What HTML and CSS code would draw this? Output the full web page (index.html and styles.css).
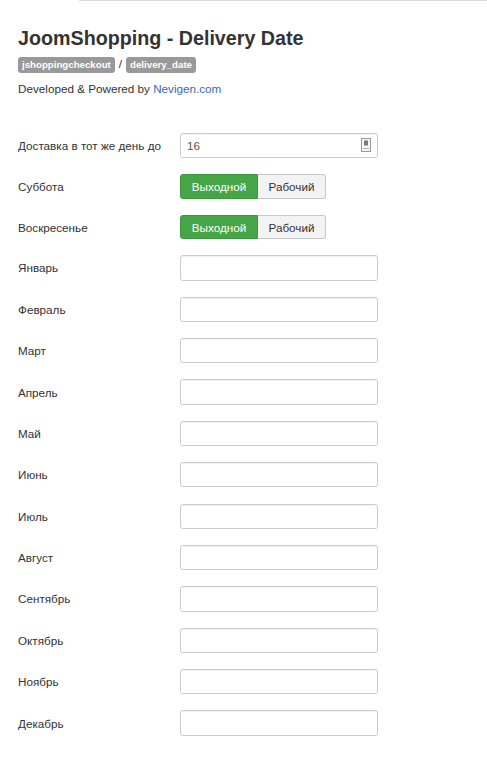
FILE: index.html
```html
<!DOCTYPE html>
<html>
<head>
<meta charset="utf-8">
<link rel="stylesheet" href="styles.css">
</head>
<body>
<div class="tabline"></div>
<div class="page">
  <h1 class="title">JoomShopping - Delivery Date</h1>
  <div class="badges"><span class="badge">jshoppingcheckout</span><span class="sep">/</span><span class="badge">delivery_date</span></div>
  <p class="credit">Developed &amp; Powered by <a href="#" class="link">Nevigen.com</a></p>

  <form class="form">
    <div class="row">
      <label class="lbl">Доставка в тот же день до</label>
      <div class="field">
        <input class="inp" type="text" value="16">
        <svg class="ficon" width="10" height="14" viewBox="0 0 10 14"><rect x="0.5" y="0.5" width="9" height="13" fill="#f4f4f4" stroke="#9a9a9a"/><rect x="3" y="2.5" width="4" height="5" fill="#7a7a7a"/><line x1="2" y1="10.5" x2="8" y2="10.5" stroke="#b0b0b0"/></svg>
      </div>
    </div>
    <div class="row row-btn">
      <label class="lbl">Суббота</label>
      <div class="btn-group"><span class="btn btn-on">Выходной</span><span class="btn btn-off">Рабочий</span></div>
    </div>
    <div class="row row-btn">
      <label class="lbl">Воскресенье</label>
      <div class="btn-group"><span class="btn btn-on">Выходной</span><span class="btn btn-off">Рабочий</span></div>
    </div>
    <div class="row"><label class="lbl">Январь</label><input class="inp" type="text"></div>
    <div class="row"><label class="lbl">Февраль</label><input class="inp" type="text"></div>
    <div class="row"><label class="lbl">Март</label><input class="inp" type="text"></div>
    <div class="row"><label class="lbl">Апрель</label><input class="inp" type="text"></div>
    <div class="row"><label class="lbl">Май</label><input class="inp" type="text"></div>
    <div class="row"><label class="lbl">Июнь</label><input class="inp" type="text"></div>
    <div class="row"><label class="lbl">Июль</label><input class="inp" type="text"></div>
    <div class="row"><label class="lbl">Август</label><input class="inp" type="text"></div>
    <div class="row"><label class="lbl">Сентябрь</label><input class="inp" type="text"></div>
    <div class="row"><label class="lbl">Октябрь</label><input class="inp" type="text"></div>
    <div class="row"><label class="lbl">Ноябрь</label><input class="inp" type="text"></div>
    <div class="row"><label class="lbl">Декабрь</label><input class="inp" type="text"></div>
  </form>
</div>
</body>
</html>
```
FILE: styles.css
```css
html, body {
  margin: 0;
  padding: 0;
  background: #fff;
}
body {
  font-family: "Liberation Sans", Arial, sans-serif;
  color: #333;
  font-size: 11.7px;
}
.tabline {
  height: 1px;
  margin-left: 79px;
  background: #dddddd;
}
.page {
  padding: 0 18px;
}
.title {
  margin: 25px 0 0;
  font-size: 19.7px;
  line-height: 24px;
  font-weight: bold;
  color: #333;
}
.badges {
  margin-top: 7px;
  display: flex;
  align-items: center;
  height: 16px;
}
.badge {
  display: inline-block;
  background: #999;
  color: #fff;
  font-weight: bold;
  font-size: 9.7px;
  line-height: 16px;
  height: 16px;
  padding: 0 4px;
  border-radius: 3px;
}
.sep {
  margin: 0 4px 0 4px;
  font-size: 11.7px;
  position: relative;
  top: -2px;
}
.credit {
  margin: 8px 0 0;
  font-size: 11.7px;
  line-height: 16px;
}
.link {
  color: #3a6aa8;
  text-decoration: none;
}
.form {
  margin-top: 36px;
  display: flex;
  flex-direction: column;
  gap: 16.2px;
}
.row {
  display: flex;
  align-items: center;
  height: 25.2px;
}
.row-btn {
  height: 24.3px;
}
.lbl {
  width: 162px;
  flex: none;
  font-size: 11.7px;
  color: #333;
}
.field {
  position: relative;
  width: 198px;
  height: 25.2px;
}
.inp {
  box-sizing: border-box;
  width: 198px;
  height: 25.2px;
  margin: 0;
  padding: 0 6px;
  border: 1px solid #cccccc;
  border-radius: 2.7px;
  box-shadow: inset 0 1px 1px rgba(0,0,0,0.06);
  font-family: "Liberation Sans", Arial, sans-serif;
  font-size: 11.7px;
  color: #555;
  background: #fff;
  outline: none;
}
.ficon {
  position: absolute;
  right: 7px;
  top: 5px;
}
.btn-group {
  display: flex;
  height: 24.3px;
}
.btn {
  box-sizing: border-box;
  height: 24.3px;
  display: flex;
  align-items: center;
  justify-content: center;
  font-size: 11.7px;
}
.btn-on {
  width: 78px;
  background: #46a546;
  border: 1px solid #3e953e;
  color: #fff;
  border-radius: 3px 0 0 3px;
}
.btn-off {
  width: 68px;
  background: #f3f3f3;
  border: 1px solid #c8c8c8;
  border-left: none;
  color: #333;
  border-radius: 0 3px 3px 0;
}
```
